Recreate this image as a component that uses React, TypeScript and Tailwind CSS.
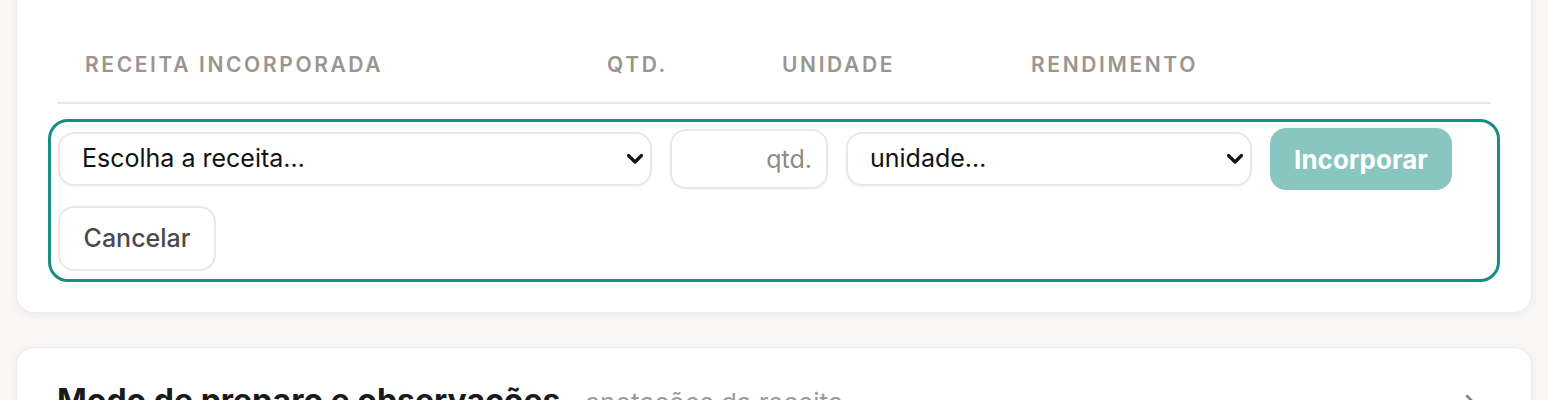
import React from "react";
import { ChevronRight } from "lucide-react";

function Chevron() {
  return (
    <svg
      className="pointer-events-none absolute right-[8px] top-1/2 -translate-y-1/2"
      width="18"
      height="12"
      viewBox="0 0 18 12"
      fill="none"
    >
      <path d="M2.5 2.5L9 9L15.5 2.5" stroke="#111" strokeWidth="3.2" strokeLinecap="round" strokeLinejoin="round" />
    </svg>
  );
}

export default function App() {
  return (
    <div className="min-h-screen overflow-hidden bg-[#f8f7f5] px-4 pb-10 font-['Inter',sans-serif]">
      <div className="-mt-[20px] rounded-[18px] border border-[#eeebe7] bg-white px-10 pb-[30px] pt-[46px] shadow-[0_2px_8px_rgba(0,0,0,0.05)]">
        <div className="grid grid-cols-[522px_175px_249px_1fr] border-b-2 border-[#ebe7e2]">
          {["RECEITA INCORPORADA", "QTD.", "UNIDADE", "RENDIMENTO"].map((h) => (
            <div
              key={h}
              className="pb-[23px] pl-7 pt-6 text-[21px] font-semibold leading-[28px] tracking-[0.125em] text-[#9a958f]"
            >
              {h}
            </div>
          ))}
        </div>
        <div className="-mx-[9px] mt-[15px] rounded-[20px] border-[3px] border-[#178e83] pb-[8px] pl-[7px] pr-[7px] pt-[6px]">
          <div className="flex flex-wrap items-center gap-x-[18px] gap-y-4">
            <div className="relative">
              <select className="h-[54px] w-[594px] appearance-none rounded-[16px] border-2 border-[#ebe7e2] bg-white pl-[22px] pr-10 text-[25px] text-[#111] shadow-[0_1px_2px_rgba(0,0,0,0.04)] outline-none">
                <option>Escolha a receita…</option>
              </select>
              <Chevron />
            </div>
            <input
              placeholder="qtd."
              className="h-[60px] w-[158px] rounded-[16px] border-2 border-[#ebe7e2] bg-white pr-[14px] text-right text-[25px] text-[#111] shadow-[0_1px_2px_rgba(0,0,0,0.04)] outline-none placeholder:text-[#8f8a84]"
            />
            <div className="relative">
              <select className="h-[54px] w-[406px] appearance-none rounded-[16px] border-2 border-[#ebe7e2] bg-white pl-[22px] pr-10 text-[25px] text-[#111] shadow-[0_1px_2px_rgba(0,0,0,0.04)] outline-none">
                <option>unidade…</option>
              </select>
              <Chevron />
            </div>
            <button className="h-[62px] w-[182px] rounded-[16px] bg-[#8ac6c0] text-[26px] font-bold text-white">
              Incorporar
            </button>
            <button className="h-[65px] w-[158px] rounded-[16px] border-2 border-[#ebe7e2] bg-white text-[25px] font-medium text-[#4a4a4a]">
              Cancelar
            </button>
          </div>
        </div>
      </div>
      <div className="mt-[34px] rounded-[18px] border border-[#eeebe7] bg-white px-10 pb-10 pt-[33px] shadow-[0_2px_8px_rgba(0,0,0,0.05)]">
        <div className="flex items-center justify-between">
          <div className="flex items-baseline gap-[25px]">
            <span className="text-[32px] font-bold leading-[40px] text-[#1a1a1a]">
              Modo de preparo e observações
            </span>
            <span className="text-[26px] text-[#a09a92]">anotações da receita</span>
          </div>
          <ChevronRight className="mr-[9px] h-6 w-6 text-[#8a857e]" strokeWidth={2.5} />
        </div>
      </div>
    </div>
  );
}
